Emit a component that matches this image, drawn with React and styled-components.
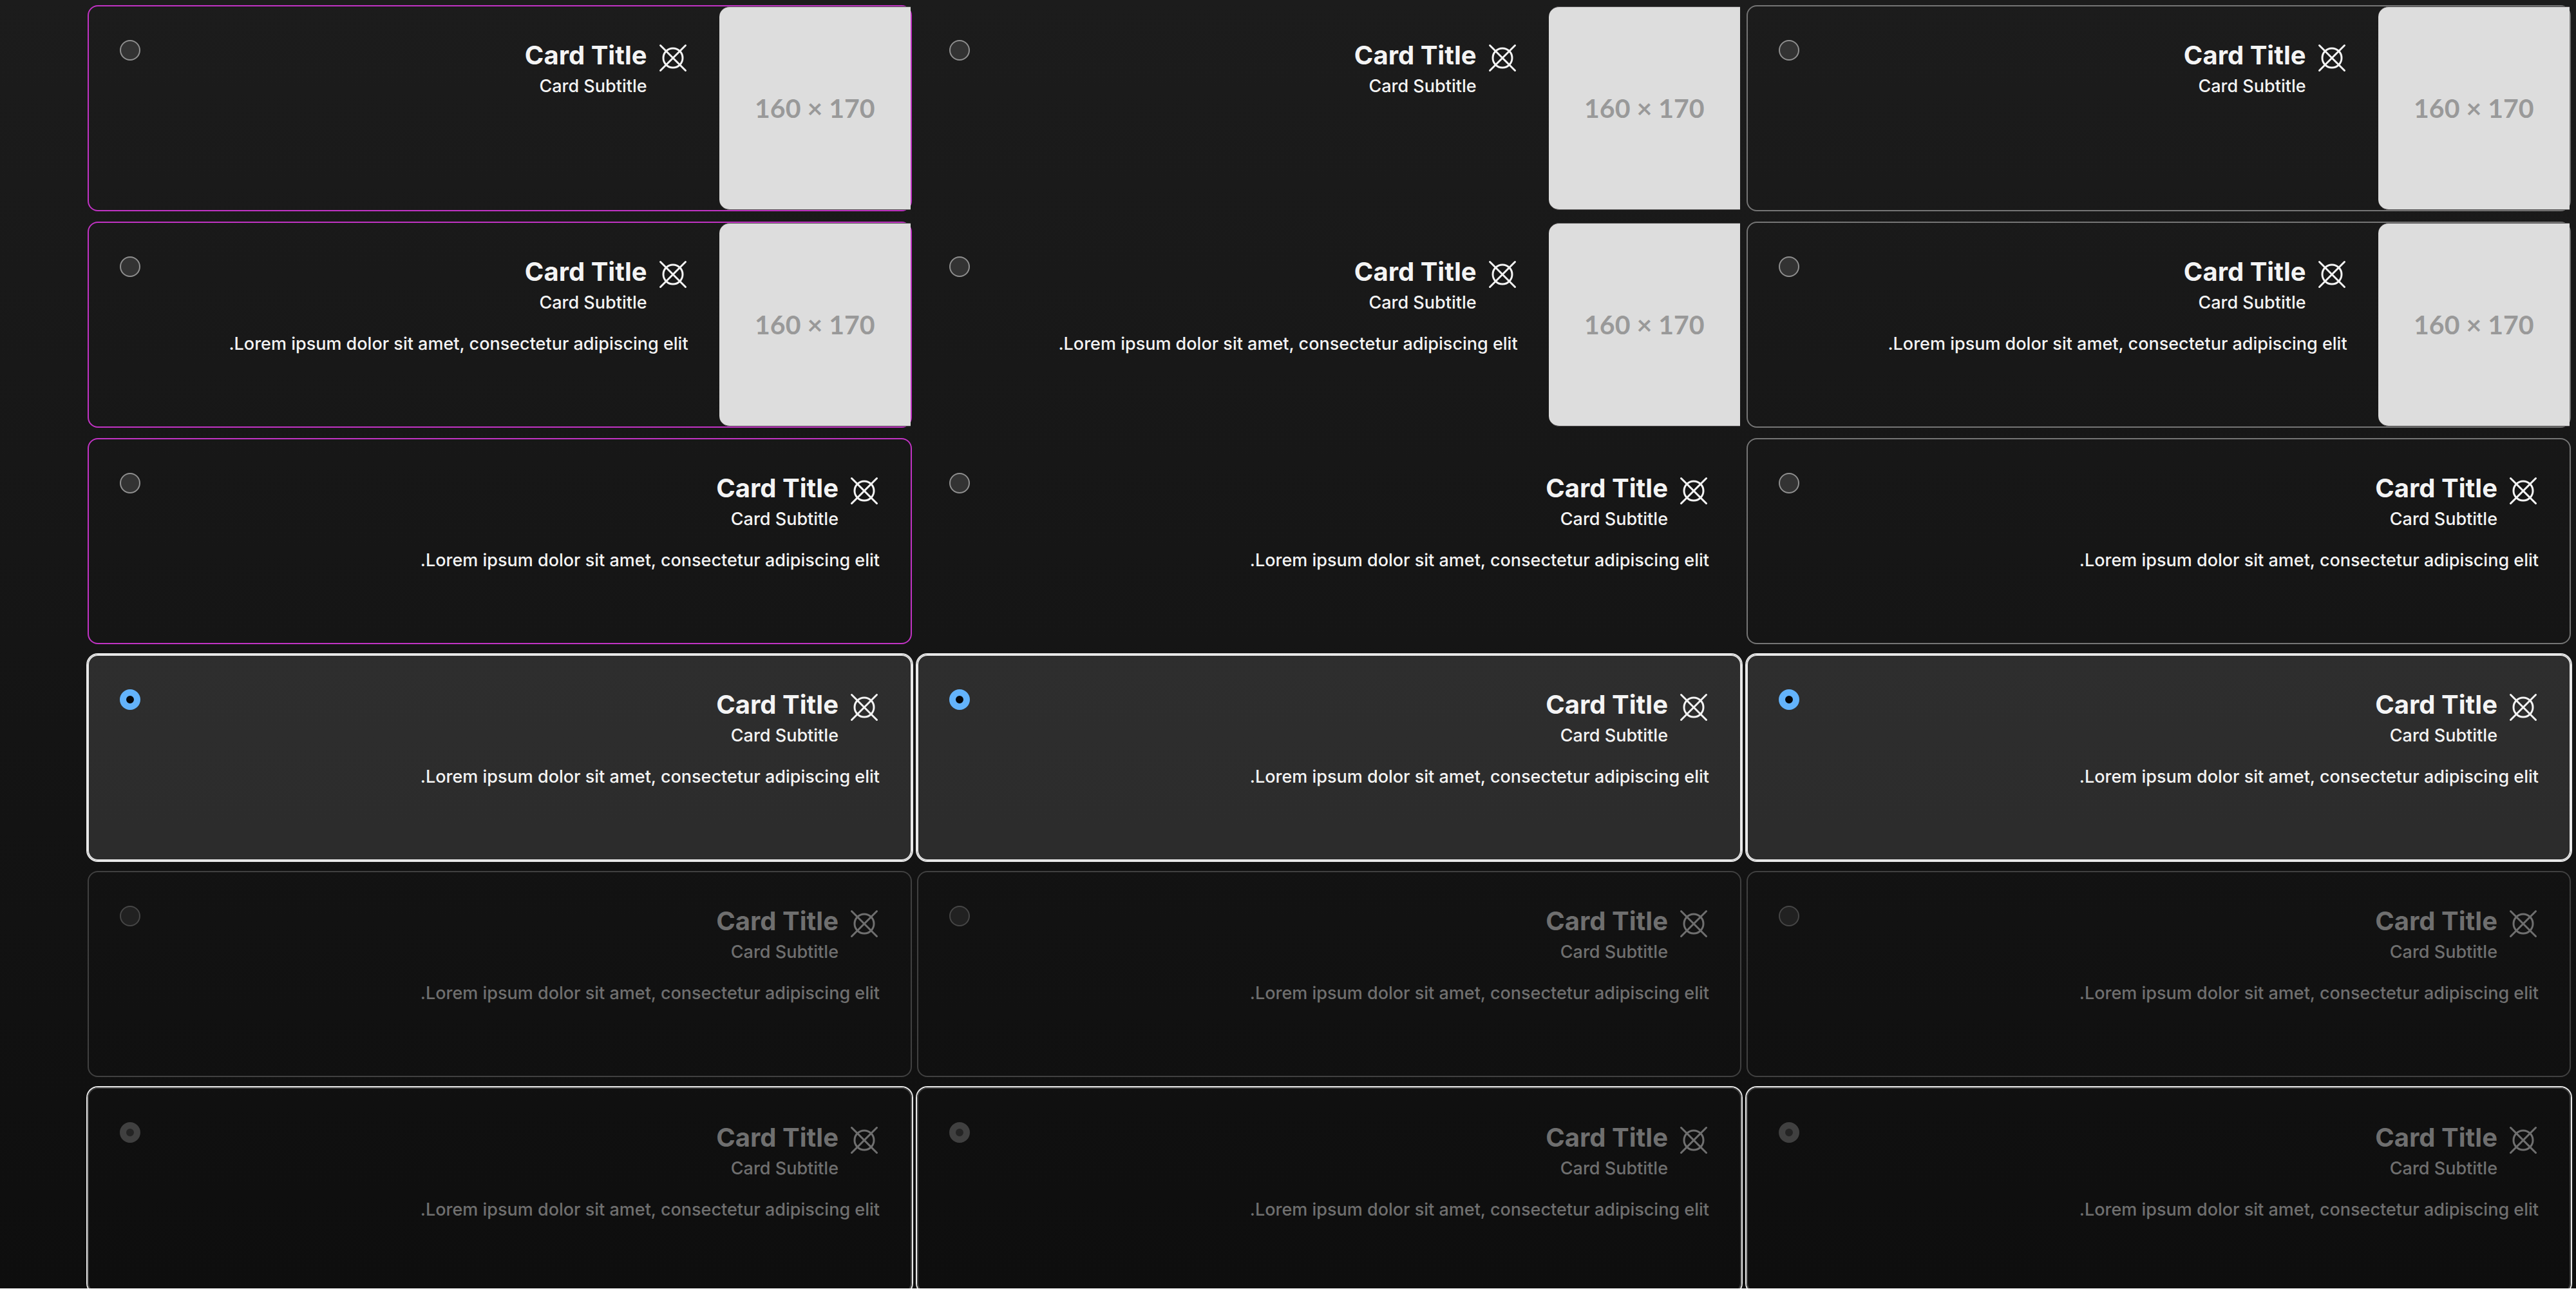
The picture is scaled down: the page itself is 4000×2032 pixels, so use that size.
import React from "react";
import styled, { createGlobalStyle, css } from "styled-components";

const GlobalStyle = createGlobalStyle`
  *, *::before, *::after { box-sizing: border-box; }
  body { margin: 0; background: #fff; }
`;

const Page = styled.main`
  height: calc(100vh - 32px);
  overflow: hidden;
  padding: 8px 8px 0 136px;
  background: linear-gradient(#1c1c1c, #0e0e0e);
  color: #f4f4f4;
  font-family: Inter, "Liberation Sans", sans-serif;
  font-size: 27px;
  font-weight: 500;
  line-height: 40px;
`;

const Grid = styled.div`
  display: grid;
  grid-template-columns: repeat(3, 1fr);
  gap: 16px 8px;
`;

const borders = {
  accent: "#c133c4",
  none: "transparent",
  neutral: "#757575",
};

const Card = styled.label`
  display: flex;
  height: 320px;
  border: 2px solid ${(p) => borders[p.$tone]};
  border-radius: 16px;
  ${(p) =>
    p.$disabled &&
    css`
      border-color: #404040;
      color: #6f6f6f;
    `}
  ${(p) =>
    p.$selected &&
    css`
      box-shadow: 0 0 0 2px #e8e8e8;
    `}
  ${(p) =>
    p.$selected &&
    !p.$disabled &&
    css`
      border-color: #e8e8e8;
      background: rgba(255, 255, 255, 0.11);
    `}
`;

const Placeholder = styled.div`
  display: flex;
  align-items: center;
  justify-content: center;
  height: 100%;
  aspect-ratio: 160 / 170;
  border: solid #4d4b4c;
  border-width: 1px 0;
  border-radius: 16px 0 0 16px;
  background: #ddd;
  color: #999;
  font-family: Lato, sans-serif;
  font-size: 41px;
  font-weight: 700;
`;

const Body = styled.div`
  flex: 1;
  display: flex;
  justify-content: space-between;
  align-items: flex-start;
  padding: 48px;
`;

const Content = styled.div`
  display: flex;
  flex-direction: column;
  gap: 24px;
`;

const Header = styled.div`
  display: flex;
  gap: 16px;
`;

const Icon = styled.svg`
  flex: none;
  width: 48px;
  height: 48px;
  margin-top: 8px;
`;

const Title = styled.div`
  font-size: 40px;
  font-weight: 700;
  line-height: 56px;
`;

const Text = styled.div``;

const Radio = styled.input`
  appearance: none;
  flex: none;
  width: 32px;
  height: 32px;
  margin: 4px 0 0;
  border: 2px solid #8f8f8f;
  border-radius: 50%;
  background: #333;
  &:checked {
    border: 10px solid #63b3fb;
    background: #05080c;
  }
  &:disabled {
    border-color: #464646;
    background: #212121;
  }
  &:checked:disabled {
    border-color: #404040;
    background: #242424;
  }
`;

function Mark() {
  return (
    <Icon viewBox="0 0 48 48" fill="none" stroke="currentColor" strokeWidth="3" strokeLinecap="round" aria-hidden="true">
      <circle cx="24" cy="24" r="15" />
      <path d="M4.5 4.5 43.5 43.5M43.5 4.5 4.5 43.5" />
    </Icon>
  );
}

const rows = [
  { image: true },
  { image: true, description: true },
  { description: true },
  { description: true, selected: true },
  { description: true, disabled: true },
  { description: true, selected: true, disabled: true },
];
const tones = ["neutral", "none", "accent"];

function SelectCard({ tone, name, image, description, selected, disabled }) {
  return (
    <Card $tone={tone} $selected={selected} $disabled={disabled}>
      {image && <Placeholder dir="ltr">160 × 170</Placeholder>}
      <Body>
        <Content>
          <Header>
            <Mark />
            <div>
              <Title>Card Title</Title>
              <Text>Card Subtitle</Text>
            </div>
          </Header>
          {description && <Text>Lorem ipsum dolor sit amet, consectetur adipiscing elit.</Text>}
        </Content>
        <Radio type="radio" name={name} defaultChecked={selected} disabled={disabled} />
      </Body>
    </Card>
  );
}

export default function App() {
  return (
    <>
      <GlobalStyle />
      <Page dir="rtl">
        <Grid>
          {rows.map((row, i) =>
            tones.map((tone) => <SelectCard key={`${tone}-${i}`} name={`${tone}-${i}`} tone={tone} {...row} />)
          )}
        </Grid>
      </Page>
    </>
  );
}
